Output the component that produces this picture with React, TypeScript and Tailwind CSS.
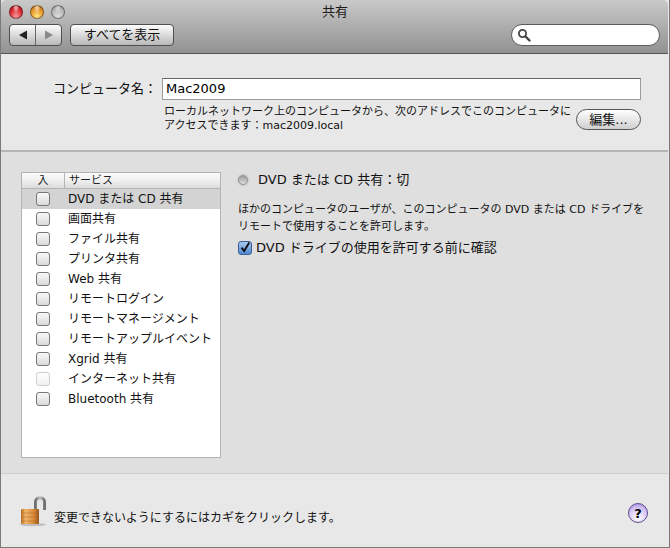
const services = [
  { name: "DVD または CD 共有", selected: true },
  { name: "画面共有" },
  { name: "ファイル共有" },
  { name: "プリンタ共有" },
  { name: "Web 共有" },
  { name: "リモートログイン" },
  { name: "リモートマネージメント" },
  { name: "リモートアップルイベント" },
  { name: "Xgrid 共有" },
  { name: "インターネット共有", disabled: true },
  { name: "Bluetooth 共有" },
];

function TrafficLight({ className }: { className: string }) {
  return <div className={`h-[14px] w-[14px] rounded-full border border-black/40 ${className}`} />;
}

function Toolbar() {
  return (
    <div className="h-[54px] shrink-0 rounded-t-[5px] border-b border-[#555] bg-gradient-to-b from-[#c9c9c9] to-[#929292] px-[8px] pt-[4px]">
      <div className="flex h-[15px] items-center gap-[7px]">
        <TrafficLight className="bg-[radial-gradient(ellipse_at_50%_12%,rgba(255,255,255,0.75),transparent_40%),radial-gradient(circle_at_50%_85%,#f79a9a,#dc2a30_55%,#a3141a)]" />
        <TrafficLight className="bg-[radial-gradient(ellipse_at_50%_12%,rgba(255,255,255,0.7),transparent_40%),radial-gradient(circle_at_50%_85%,#ffe680,#ea982c_55%,#b06a12)]" />
        <TrafficLight className="bg-[radial-gradient(ellipse_at_50%_12%,rgba(255,255,255,0.5),transparent_40%),radial-gradient(circle_at_50%_85%,#dcdcdc,#b6b6b6_60%,#959595)]" />
        <div className="flex-1 pr-[62px] text-center text-[13px] leading-[15px] text-[#1a1a1a]">共有</div>
      </div>
      <div className="mt-[5px] flex h-[22px] items-center">
        <div className="flex h-[22px] w-[53px] overflow-hidden rounded-[4px] border border-[#4f4f4f] bg-gradient-to-b from-[#fdfdfd] to-[#b9b9b9]">
          <div className="flex w-[26px] items-center justify-center border-r border-[#666]">
            <svg width="10" height="10" viewBox="0 0 10 10">
              <path d="M1 5 L9 0.5 V9.5 Z" fill="#222" />
            </svg>
          </div>
          <div className="flex flex-1 items-center justify-center">
            <svg width="10" height="10" viewBox="0 0 10 10">
              <path d="M9 5 L1 0.5 V9.5 Z" fill="#8a8a8a" />
            </svg>
          </div>
        </div>
        <div className="ml-[8px] flex h-[22px] w-[104px] items-center justify-center rounded-[4px] border border-[#4f4f4f] bg-gradient-to-b from-[#fdfdfd] to-[#b9b9b9] text-[13px] text-[#111]">
          すべてを表示
        </div>
        <div className="ml-auto flex h-[22px] w-[149px] items-center rounded-full border border-[#5c5c5c] bg-white pl-[5px]">
          <svg width="14" height="14" viewBox="0 0 14 14" fill="none" stroke="#444">
            <circle cx="5.5" cy="5.5" r="3.6" strokeWidth="1.8" />
            <path d="M8.5 8.5 L12.5 12.5" strokeWidth="2.4" strokeLinecap="round" />
          </svg>
        </div>
      </div>
    </div>
  );
}

function ComputerName() {
  return (
    <div className="h-[98px] shrink-0 border-b-2 border-[#b5b5b5] bg-[#e8e8e8] pl-[52px] pr-[27px] pt-[24px]">
      <div className="flex items-center">
        <div className="w-[109px] text-[13px] leading-[22px] text-[#111]">コンピュータ名：</div>
        <div className="flex h-[22px] flex-1 items-center border border-[#9b9b9b] border-t-[#666] bg-white pl-[3px] text-[13px] text-black">
          Mac2009
        </div>
      </div>
      <div className="mt-[5px] flex">
        <div className="ml-[111px] flex-1 whitespace-nowrap text-[11px] leading-[14px] text-[#111]">
          <div>ローカルネットワーク上のコンピュータから、次のアドレスでこのコンピュータに</div>
          <div>アクセスできます：mac2009.local</div>
        </div>
        <div className="mt-[4px] flex h-[21px] w-[65px] items-center justify-center rounded-full border border-[#555] bg-gradient-to-b from-[#ffffff] to-[#cfcfcf] text-[13px] text-[#111]">
          編集...
        </div>
      </div>
    </div>
  );
}

function ServiceList() {
  return (
    <div className="h-[286px] w-[200px] shrink-0 border border-[#b4b4b4] bg-white">
      <div className="flex h-[16px] border-b border-[#b4b4b4] bg-gradient-to-b from-[#fcfcfc] via-[#efefef] to-[#dcdcdc] text-[11px] leading-[15px] text-[#222]">
        <div className="w-[43px] border-r border-[#b4b4b4] text-center">入</div>
        <div className="pl-[4px]">サービス</div>
      </div>
      {services.map((s) => (
        <div key={s.name} className={`flex h-[20px] items-center ${s.selected ? "bg-[#d3d3d3]" : ""}`}>
          <div
            className={`ml-[14px] h-[14px] w-[14px] rounded-[3px] border bg-gradient-to-b ${
              s.disabled ? "border-[#cfcfcf] from-[#ffffff] to-[#f0f0f0]" : "border-[#777] from-[#f8f8f8] to-[#dadada]"
            }`}
          />
          <div className="ml-[18px] whitespace-nowrap text-[12px] text-[#111]">{s.name}</div>
        </div>
      ))}
    </div>
  );
}

function Detail() {
  return (
    <div className="ml-[17px] flex-1">
      <div className="flex h-[16px] items-center">
        <div className="h-[10px] w-[10px] rounded-full border border-[#8f8f8f] bg-gradient-to-b from-[#9c9c9c] to-[#dedede] shadow-[0_0_2px_rgba(0,0,0,0.3)]" />
        <div className="ml-[10px] text-[13px] text-[#111]">DVD または CD 共有：切</div>
      </div>
      <div className="mt-[13px] whitespace-nowrap text-[11px] leading-[17px] text-[#111]">
        <div>ほかのコンピュータのユーザが、このコンピュータの DVD または CD ドライブを</div>
        <div>リモートで使用することを許可します。</div>
      </div>
      <div className="mt-[6px] flex items-center">
        <div className="flex h-[14px] w-[14px] items-center justify-center rounded-[3px] border border-[#3b5f95] bg-gradient-to-b from-[#a9c8ee] to-[#4f8ad6]">
          <svg width="14" height="14" viewBox="0 0 14 14" fill="none" stroke="#111">
            <path d="M3 6.5 L6 10.5 L12 0.5" strokeWidth="2.2" />
          </svg>
        </div>
        <div className="ml-[4px] whitespace-nowrap text-[13px] leading-[14px] text-[#111]">DVD ドライブの使用を許可する前に確認</div>
      </div>
    </div>
  );
}

function Lock() {
  return (
    <svg width="28" height="31" viewBox="0 0 28 31" className="shrink-0">
      <defs>
        <linearGradient id="brass" x1="0" x2="1" y1="0" y2="0">
          <stop offset="0" stopColor="#b86a1e" />
          <stop offset="0.25" stopColor="#f0b56c" />
          <stop offset="0.7" stopColor="#d98a38" />
          <stop offset="1" stopColor="#96551a" />
        </linearGradient>
        <linearGradient id="steel" x1="0" x2="1" y1="0" y2="0">
          <stop offset="0" stopColor="#6f6f6f" />
          <stop offset="0.5" stopColor="#c4c4c4" />
          <stop offset="1" stopColor="#6f6f6f" />
        </linearGradient>
      </defs>
      <ellipse cx="13" cy="28.6" rx="13" ry="1.6" fill="#000" opacity="0.18" />
      <path d="M15.5 14 V6 C15.5 0.5 24.5 0.5 24.5 6 V14" fill="none" stroke="url(#steel)" strokeWidth="3" />
      <rect x="1" y="13" width="18" height="15" rx="1" fill="url(#brass)" />
      <path d="M2 17 H18 M2 21 H18 M2 25 H18" stroke="#a8641f" strokeOpacity="0.45" />
    </svg>
  );
}

function Footer() {
  return (
    <div className="flex flex-1 border-t border-[#cfcfcf] bg-[#e8e8e8] pl-[19px] pr-[20px]">
      <div className="mt-[22px]">
        <Lock />
      </div>
      <div className="ml-[6px] mt-[36px] text-[12px] leading-[16px] text-[#111]">
        変更できないようにするにはカギをクリックします。
      </div>
      <div className="ml-auto mt-[29px] flex h-[20px] w-[20px] items-center justify-center rounded-full border border-[#5b4a8a] bg-[radial-gradient(circle_at_50%_75%,#ffffff,#d9c9f7_55%,#9c86d8)] text-[13px] font-bold leading-none text-black">
        ?
      </div>
    </div>
  );
}

export default function App() {
  return (
    <div
      className="flex h-[548px] w-[670px] flex-col overflow-hidden border-x border-b border-[#7a7a7a] bg-[#e8e8e8] pr-[1px]"
      style={{ fontFamily: '"DejaVu Sans", "Noto Sans CJK JP", sans-serif' }}
    >
      <Toolbar />
      <ComputerName />
      <div className="flex h-[321px] shrink-0 bg-[#dfdfdf] pl-[20px] pt-[20px]">
        <ServiceList />
        <Detail />
      </div>
      <Footer />
    </div>
  );
}
